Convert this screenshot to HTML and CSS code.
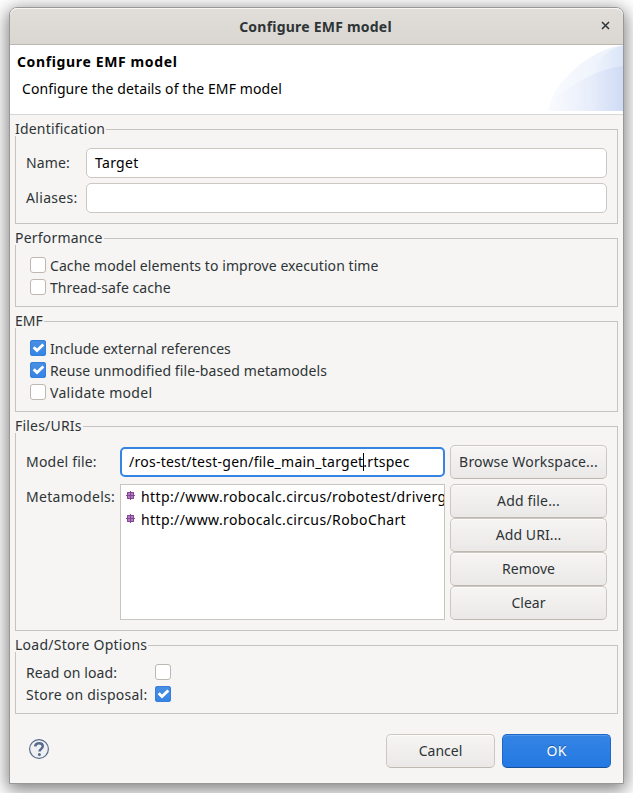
FILE: index.html
```html
<!DOCTYPE html>
<html lang="en">
<head>
<meta charset="utf-8">
<title>Configure EMF model</title>
<link rel="stylesheet" href="styles.css">
</head>
<body>
<svg width="0" height="0" class="defs" aria-hidden="true">
  <defs>
    <symbol id="package" viewBox="0 0 9 9"><path fill="#b376be" d="M1 1h7v7H1z"/><path d="M4.500 0v9M0 4.500h9M1.500 1.500h6v6h-6z" fill="none" stroke="#804893"/><path d="M2 2h2v2H2zM5 2h2v2H5zM2 5h2v2H2zM5 5h2v2H5z" fill="#b67bc3"/></symbol>
    <symbol id="check" viewBox="0 0 16 16"><path d="M3.700 7.300 7 10.500 13.300 4.500" fill="none" stroke="#fff" stroke-width="2.900"/></symbol>
  </defs>
</svg>
<div class="window">
  <header class="titlebar"><span class="title">Configure EMF model</span>
    <svg class="close" width="9" height="9" viewBox="0 0 9 9"><path d="M1 1l7 7M8 1l-7 7" stroke="#2e3436" stroke-width="1.500"/></svg>
  </header>
  <div class="banner">
    <div class="banner-text">
      <h1>Configure EMF model</h1>
      <p class="t-desc">Configure the details of the EMF model</p>
    </div>
    <svg class="art" width="75" height="66" viewBox="0 0 75 66">
      <defs>
        <linearGradient id="g1"><stop offset="0" stop-color="#f9fbfe"/><stop offset="1" stop-color="#eaf0fb"/></linearGradient>
        <linearGradient id="g2"><stop offset="0" stop-color="#f3f7fd"/><stop offset="1" stop-color="#dbe5f8"/></linearGradient>
        <linearGradient id="g3"><stop offset="0" stop-color="#fafbfe"/><stop offset=".55" stop-color="#e8eefa"/><stop offset="1" stop-color="#cfdbf5"/></linearGradient>
      </defs>
      <path d="M0 66C4 38 40 5 75 0v66z" fill="url(#g1)"/>
      <path d="M40 34C49 16 60 3 75 1v40H40z" fill="url(#g2)"/>
      <path d="M0 66C2 60 4 57 7 53 25 38 50 24 75 21v45z" fill="url(#g3)"/>
    </svg>
  </div>
  <main class="content">
    <section class="group identification">
      <h2 class="t-ident">Identification</h2>
      <div class="fields">
        <span class="t-name">Name:</span><div class="entry"><span class="t-target">Target</span></div>
        <span class="t-alias">Aliases:</span><div class="entry"></div>
      </div>
    </section>
    <section class="group performance">
      <h2 class="t-perf">Performance</h2>
      <div class="checks">
        <div class="row"><i class="box"></i><span class="t-cache">Cache model elements to improve execution time</span></div>
        <div class="row"><i class="box"></i><span class="t-thread">Thread-safe cache</span></div>
      </div>
    </section>
    <section class="group emf">
      <h2 class="t-emf">EMF</h2>
      <div class="checks">
        <div class="row"><svg class="box on"><use href="#check"/></svg><span class="t-include">Include external references</span></div>
        <div class="row"><svg class="box on"><use href="#check"/></svg><span class="t-reuse">Reuse unmodified file-based metamodels</span></div>
        <div class="row"><i class="box"></i><span class="t-valid">Validate model</span></div>
      </div>
    </section>
    <section class="group files">
      <h2 class="t-files">Files/URIs</h2>
      <div class="files-grid">
        <span class="file-label t-mfile">Model file:</span>
        <div class="entry focused"><span class="t-path">/ros-test/test-gen/file_main_target</span><i class="caret"></i><span class="t-path">.rtspec</span></div>
        <div class="button"><span class="t-browse">Browse Workspace...</span></div>
        <span class="meta-label t-meta">Metamodels:</span>
        <div class="list">
          <div class="item"><svg width="9" height="9"><use href="#package"/></svg><span>http://www.robocalc.circus/robotest/drivergen</span></div>
          <div class="item"><svg width="9" height="9"><use href="#package"/></svg><span>http://www.robocalc.circus/RoboChart</span></div>
        </div>
        <div class="stack">
          <div class="button"><span class="t-addf">Add file...</span></div>
          <div class="button"><span class="t-addu">Add URI...</span></div>
          <div class="button"><span>Remove</span></div>
          <div class="button"><span>Clear</span></div>
        </div>
      </div>
    </section>
    <section class="group options">
      <h2 class="t-load">Load/Store Options</h2>
      <div class="option-rows">
        <div class="row"><span class="opt t-read">Read on load:</span><i class="box"></i></div>
        <div class="row"><span class="opt t-store">Store on disposal:</span><svg class="box on"><use href="#check"/></svg></div>
      </div>
    </section>
  </main>
  <footer class="footer">
    <svg class="help" width="20" height="20" viewBox="0 0 20 20"><circle cx="10" cy="10" r="9.400" fill="#eff0f1" stroke="#586b8e" stroke-width="1.200"/><path d="M6.300 7.600C6.300 5.100 7.800 4.200 10 4.200s3.800 1.100 3.800 3.100c0 2.600-3.300 2.600-3.300 5.300" fill="none" stroke="#586b8e" stroke-width="2.500"/><circle cx="10.400" cy="15.600" r="1.500" fill="#586b8e"/></svg>
    <div class="button"><span>Cancel</span></div>
    <div class="button primary"><span class="t-ok">OK</span></div>
  </footer>
</div>
</body>
</html>
```
FILE: styles.css
```css
* { box-sizing: border-box; }
body { margin: 0; width: 633px; height: 793px; overflow: hidden; padding: 7px 9px; background: #fff; font: 14px/20px "Noto Sans", sans-serif; color: #2e3436; }
.defs { position: absolute; }
h1, h2, p { margin: 0; font-size: 14px; }
span, h1, h2, p { white-space: nowrap; }
.window { width: 615px; height: 777px; border: 1px solid #989898; border-radius: 8px 8px 0 0; background: #f6f5f3; box-shadow: 0 4px 17px 2px rgba(0,0,0,.5); display: flex; flex-direction: column; }
.titlebar { height: 37px; flex: none; border-bottom: 1px solid #bcb7ae; border-radius: 7px 7px 0 0; box-shadow: inset 0 1px #f7f6f5; background: linear-gradient(#e1deda, #dad6d1); display: flex; align-items: center; justify-content: flex-end; padding-right: 13px; }
.title { flex: 1; margin-left: 14px; padding: 2px 0 0 6px; text-align: center; font-weight: 700; letter-spacing: .22px; }
.close { margin-bottom: 1px; }
.banner { height: 70px; flex: none; background: #fff; border-bottom: 1px solid #d7d7d7; display: flex; justify-content: space-between; color: #000; }
.banner-text { padding: 7px 0 0 7px; }
.banner-text h1 { letter-spacing: .63px; }
.banner-text p { padding: 7px 0 0 5px; }
.art { display: block; }
.content { padding: 14px 5px 0; }
.group { border: 1px solid #c5c4c1; margin-bottom: 14px; }
.group h2 { font-weight: 400; line-height: 14px; height: 14px; width: fit-content; background: #f6f5f3; margin: -8px 0 0 -1px; padding-right: 1px; }
.identification { height: 95px; }
.performance { height: 69px; }
.emf { height: 91px; }
.files { height: 205px; }
.options { height: 69px; }
.fields { display: grid; grid-template-columns: 60px 1fr; row-gap: 5px; align-items: center; padding: 12px 10px 0; }
.entry { height: 30px; border: 1px solid #cdc7c2; border-radius: 5px; background: #fff; color: #000; padding-left: 8px; display: flex; align-items: center; }
.checks { padding: 9px 0 0 14px; }
.row { height: 22px; display: flex; align-items: center; }
.row span { padding-top: 2px; }
.checks .row { gap: 4px; }
.box { display: block; flex: none; width: 16px; height: 16px; border: 1px solid #bfb8b1; border-radius: 3px; background: #fff; }
.box.on { border: 0; background: linear-gradient(#4a90e4, #3584e4); box-shadow: inset 0 0 0 1px #347fd9; }
.files-grid { display: grid; grid-template-columns: 94px 325px 162px; row-gap: 5px; padding: 12px 0 0 10px; }
.file-label { line-height: 34px; }
.entry.focused { border: 2px solid #3584e4; align-self: center; padding-left: 7px; }
.caret { width: 1px; height: 18px; background: #000; margin-right: -1px; }
.meta-label { line-height: 26px; }
.list { height: 136px; border: 1px solid #c8c4bf; background: #fff; color: #000; overflow: hidden; letter-spacing: .39px; }
.item { height: 23px; display: flex; align-items: center; gap: 6px; padding-left: 5px; }
.item svg { flex: none; margin-bottom: 2px; }
.button { height: 34px; border: 1px solid #cdc7c2; border-bottom-color: #bfb8b1; border-radius: 5px; background: linear-gradient(#f6f5f4, #eae9e8); box-shadow: inset 0 1px #fbfbfa; display: flex; align-items: center; justify-content: center; }
.files-grid > .button, .stack { margin-left: 5px; width: 157px; }
.option-rows { padding: 9px 0 0 10px; }
.opt { width: 129px; }
.footer { display: flex; align-items: center; padding: 6px 12px 0 19px; }
.help { margin: 0 auto 4px 0; }
.footer .button { width: 109px; margin-left: 7px; }
.button.primary { color: #fff; border-color: #1b6acb; border-bottom-color: #155099; background: linear-gradient(#3584e4, #2379e2); box-shadow: inset 0 1px #5496e7; text-shadow: 0 -1px #1a59a8; }
.t-include { letter-spacing: .05px; }
.t-cache, .t-thread { letter-spacing: .07px; }
.t-desc, .t-reuse, .t-read, .t-name, .t-addu { letter-spacing: .1px; }
.t-addf, .t-browse { letter-spacing: .17px; }
.t-ident, .t-perf, .t-files, .t-mfile { letter-spacing: .2px; }
.t-load, .t-store, .t-path { letter-spacing: .25px; }
.t-alias, .t-target, .t-valid, .t-meta, .t-ok { letter-spacing: .32px; }
```
